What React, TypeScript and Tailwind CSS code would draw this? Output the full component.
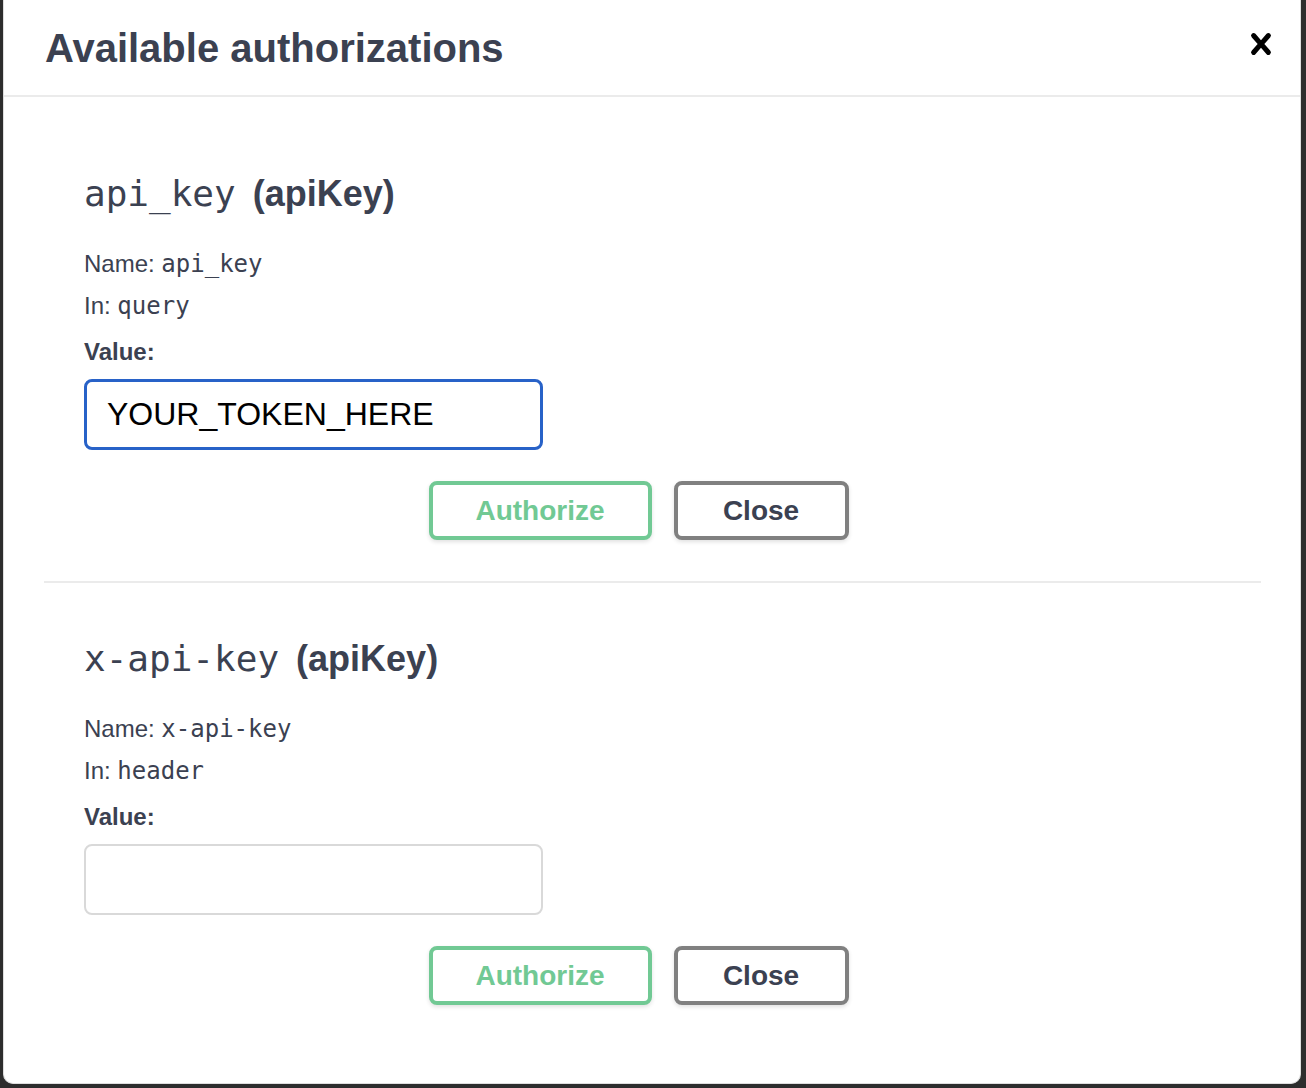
import React from "react";

const schemes = [
  { id: "api_key", kind: "apiKey", where: "query", value: "YOUR_TOKEN_HERE", focused: true },
  { id: "x-api-key", kind: "apiKey", where: "header", value: "", focused: false },
];

const mono = "font-['DejaVu_Sans_Mono',monospace]";

const CloseIcon = () => (
  <svg width="42" height="42" viewBox="0 0 20 20" className="mb-[8px]" aria-hidden="true">
    <path
      fill="#000"
      d="M14.348 14.849a1.2 1.2 0 0 1-1.697 0L10 11.819l-2.651 3.029a1.2 1.2 0 1 1-1.697-1.697l2.758-3.15-2.759-3.152a1.2 1.2 0 1 1 1.697-1.697L10 8.183l2.651-3.031a1.2 1.2 0 1 1 1.697 1.697l-2.758 3.152 2.758 3.15a1.2 1.2 0 0 1 0 1.698z"
    />
  </svg>
);

const AuthBlock = ({ scheme, first }: { scheme: (typeof schemes)[number]; first: boolean }) => (
  <div
    className={`px-[40px] ${
      first ? "pt-[75px] pb-[41px] border-b-2 border-[#ebebeb]" : "pt-[54px]"
    }`}
  >
    <h4 className="flex items-baseline text-[36px] leading-[44px] text-[#3b4151]">
      <code className={mono}>{scheme.id}</code>
      <span className="ml-[17px] font-bold">({scheme.kind})</span>
    </h4>

    <p className="mt-[32px] text-[24px] leading-[32px] text-[#3b4151]">
      Name: <code className={mono}>{scheme.id}</code>
    </p>
    <p className="mt-[10px] text-[24px] leading-[32px] text-[#3b4151]">
      In: <code className={mono}>{scheme.where}</code>
    </p>
    <p className="mt-[14px] text-[24px] leading-[32px] font-bold text-[#3b4151]">Value:</p>

    <input
      readOnly
      value={scheme.value}
      className={`mt-[11px] block w-[459px] h-[71px] rounded-[8px] bg-white px-[20px] text-[32px] text-black outline-none ${
        scheme.focused ? "border-[3px] border-[#2862c8]" : "border-2 border-[#d9d9d9]"
      }`}
    />

    {/* Buttons */}
    <div className="mt-[31px] flex justify-center gap-[22px]">
      <button className="shrink-0 w-[223px] h-[59px] rounded-[8px] border-4 border-[#71c994] bg-white text-[28px] font-bold text-[#71c994] shadow-[0_2px_4px_rgba(0,0,0,0.12)]">
        Authorize
      </button>
      <button className="shrink-0 mr-[28px] w-[175px] h-[59px] rounded-[8px] border-4 border-[#808080] bg-white text-[28px] font-bold text-[#3b4151] shadow-[0_2px_4px_rgba(0,0,0,0.12)]">
        Close
      </button>
    </div>
  </div>
);

export default function App() {
  return (
    <div className="flex w-[1306px] h-[1088px] bg-[#2d2d2d] pl-[3px] pr-[5px] pb-[4px] font-['Liberation_Sans',Arial,sans-serif]">
      <div className="flex flex-1 flex-col rounded-b-[10px] border-x border-b border-[#dedede] bg-white">
        {/* Header */}
        <div className="flex h-[97px] items-center justify-between border-b-2 border-[#ebebeb] pl-[41px] pr-[18px]">
          <h3 className="text-[40px] leading-[40px] font-bold text-[#3b4151]">Available authorizations</h3>
          <CloseIcon />
        </div>

        {/* Content */}
        <div className="flex flex-1 flex-col pl-[40px] pr-[39px]">
          {schemes.map((s, i) => (
            <AuthBlock key={s.id} scheme={s} first={i === 0} />
          ))}
        </div>
      </div>
    </div>
  );
}
